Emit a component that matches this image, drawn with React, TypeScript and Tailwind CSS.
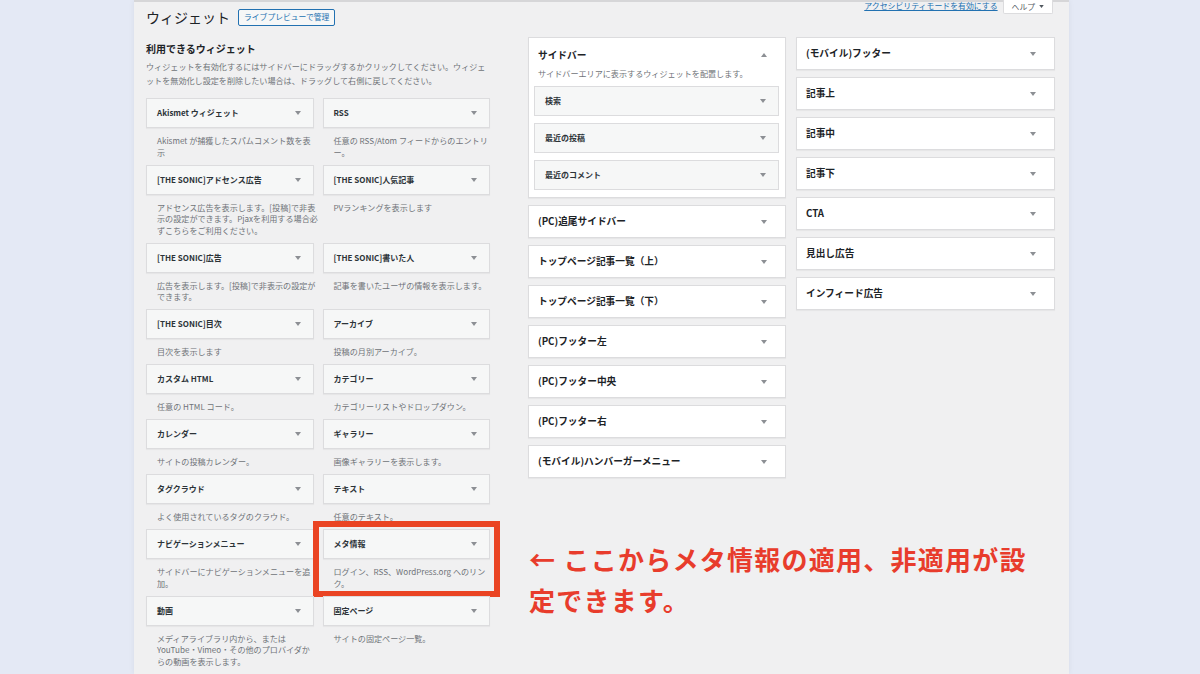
import React from "react";

type W = { t: string; d: string[]; red?: boolean };

const rows: [W, W][] = [
  [
    { t: "Akismet ウィジェット", d: ["Akismet が捕獲したスパムコメント数を表", "示"] },
    { t: "RSS", d: ["任意の RSS/Atom フィードからのエントリ", "ー。"] },
  ],
  [
    {
      t: "[THE SONIC]アドセンス広告",
      d: ["アドセンス広告を表示します。[投稿]で非表", "示の設定ができます。Pjaxを利用する場合必", "ずこちらをご利用ください。"],
    },
    { t: "[THE SONIC]人気記事", d: ["PVランキングを表示します"] },
  ],
  [
    { t: "[THE SONIC]広告", d: ["広告を表示します。[投稿]で非表示の設定が", "できます。"] },
    { t: "[THE SONIC]書いた人", d: ["記事を書いたユーザの情報を表示します。"] },
  ],
  [
    { t: "[THE SONIC]目次", d: ["目次を表示します"] },
    { t: "アーカイブ", d: ["投稿の月別アーカイブ。"] },
  ],
  [
    { t: "カスタム HTML", d: ["任意の HTML コード。"] },
    { t: "カテゴリー", d: ["カテゴリーリストやドロップダウン。"] },
  ],
  [
    { t: "カレンダー", d: ["サイトの投稿カレンダー。"] },
    { t: "ギャラリー", d: ["画像ギャラリーを表示します。"] },
  ],
  [
    { t: "タグクラウド", d: ["よく使用されているタグのクラウド。"] },
    { t: "テキスト", d: ["任意のテキスト。"] },
  ],
  [
    { t: "ナビゲーションメニュー", d: ["サイドバーにナビゲーションメニューを追", "加。"] },
    { t: "メタ情報", d: ["ログイン、RSS、WordPress.org へのリン", "ク。"], red: true },
  ],
  [
    { t: "動画", d: ["メディアライブラリ内から、または", "YouTube・Vimeo・その他のプロバイダか", "らの動画を表示します。"] },
    { t: "固定ページ", d: ["サイトの固定ページ一覧。"] },
  ],
];

const col1 = [
  "(PC)追尾サイドバー",
  "トップページ記事一覧（上）",
  "トップページ記事一覧（下）",
  "(PC)フッター左",
  "(PC)フッター中央",
  "(PC)フッター右",
  "(モバイル)ハンバーガーメニュー",
];

const col2 = ["(モバイル)フッター", "記事上", "記事中", "記事下", "CTA", "見出し広告", "インフィード広告"];

function Down() {
  return (
    <svg width="6" height="4" viewBox="0 0 6 4" className="shrink-0">
      <path d="M0 0h6L3 4z" fill="#8c8f94" />
    </svg>
  );
}

function Up() {
  return (
    <svg width="6" height="4" viewBox="0 0 6 4" className="shrink-0">
      <path d="M0 4h6L3 0z" fill="#8c8f94" />
    </svg>
  );
}

function Widget({ w }: { w: W }) {
  return (
    <div className="relative">
      <div className="h-[30px] border border-[#dcdcde] bg-[#f6f7f7] flex items-center justify-between pl-[10px] pr-[12px] shadow-[0_1px_1px_rgba(0,0,0,0.04)]">
        <span className="text-[8px] font-bold text-[#2c3338]">{w.t}</span>
        <Down />
      </div>
      <div className="pt-[7px] pb-[6.5px] pl-[11px] text-[8.1px] leading-[11.5px] text-[#6f7378]">
        {w.d.map((l, i) => (
          <div key={i} className="whitespace-nowrap">
            {l}
          </div>
        ))}
      </div>
      {w.red && (
        <div className="absolute -left-[10px] -right-[10px] -top-[8px] -bottom-[1px] border-[6px] border-[#ea4423] pointer-events-none" />
      )}
    </div>
  );
}

function ClosedSidebar({ t }: { t: string }) {
  return (
    <div className="h-[33px] bg-white border border-[#dcdcde] flex items-center justify-between pl-[9px] pr-[18px] shadow-[0_1px_1px_rgba(0,0,0,0.04)]">
      <span className="text-[9.7px] font-bold text-[#1d2327]">{t}</span>
      <Down />
    </div>
  );
}

function InnerWidget({ t }: { t: string }) {
  return (
    <div className="h-[30px] border border-[#dcdcde] bg-[#f6f7f7] flex items-center justify-between pl-[10px] pr-[12px]">
      <span className="text-[8px] font-bold text-[#2c3338]">{t}</span>
      <Down />
    </div>
  );
}

export default function App() {
  return (
    <div className="w-[1200px] h-[674px] overflow-hidden bg-[#e4e9f5] font-['Noto_Sans_CJK_JP','Noto_Sans',sans-serif]">
      <div className="relative ml-[134px] w-[935px] h-[674px] bg-[#f0f0f1] border-t-2 border-[#d6d6d8] shadow-[0_0_6px_rgba(0,0,0,0.06)]">
        {/* header */}
        <div className="flex justify-between items-start pl-[12px] pr-[16px]">
          <div className="flex items-center gap-[8px] pt-[5px]">
            <h1 className="text-[14px] leading-[20px] text-[#1d2327] font-normal">ウィジェット</h1>
            <div className="h-[17px] border border-[#2271b1] bg-[#f6f7f7] rounded-[2px] px-[5px] flex items-center text-[7.8px] text-[#2271b1]">
              ライブプレビューで管理
            </div>
          </div>
          <div className="flex items-start gap-[5px] -mt-[2px]">
            <span className="text-[7.9px] leading-[12px] text-[#2271b1] underline">アクセシビリティモードを有効にする</span>
            <div className="h-[14px] bg-white border-x border-b border-[#dcdcde] rounded-b-[2px] px-[8px] flex items-center gap-[4px] text-[7.8px] text-[#50575e]">
              ヘルプ
              <svg width="5" height="3" viewBox="0 0 6 4">
                <path d="M0 0h6L3 4z" fill="#50575e" />
              </svg>
            </div>
          </div>
        </div>

        {/* content */}
        <div className="flex pl-[12px] pr-[13px] mt-[10px]">
          {/* available widgets */}
          <div className="w-[344px] shrink-0 pt-[5px]">
            <h2 className="text-[10px] leading-[14px] font-bold text-[#1d2327]">利用できるウィジェット</h2>
            <div className="mt-[4px] text-[8.1px] leading-[14px] text-[#6f7378]">
              <div className="whitespace-nowrap">ウィジェットを有効化するにはサイドバーにドラッグするかクリックしてください。ウィジェ</div>
              <div className="whitespace-nowrap">ットを無効化し設定を削除したい場合は、ドラッグして右側に戻してください。</div>
            </div>
            <div className="mt-[10px] grid grid-cols-2 gap-x-[9px]">
              {rows.map((r, i) => (
                <React.Fragment key={i}>
                  <Widget w={r[0]} />
                  <Widget w={r[1]} />
                </React.Fragment>
              ))}
              <div className="h-[30px] border border-[#dcdcde] bg-[#f6f7f7]" />
              <div className="h-[30px] border border-[#dcdcde] bg-[#f6f7f7]" />
            </div>
          </div>

          {/* sidebar column 1 */}
          <div className="ml-[38px] w-[258px] shrink-0 flex flex-col gap-[7px]">
            <div className="bg-white border border-[#dcdcde] pb-[7px] shadow-[0_1px_1px_rgba(0,0,0,0.04)]">
              <div className="flex items-center justify-between pl-[9px] pr-[18px] h-[30px] pt-[4px]">
                <span className="text-[9.7px] font-bold text-[#1d2327]">サイドバー</span>
                <Up />
              </div>
              <div className="pl-[9px] text-[8.1px] leading-[11px] text-[#6f7378] whitespace-nowrap">
                サイドバーエリアに表示するウィジェットを配置します。
              </div>
              <div className="mt-[7px] px-[5px] flex flex-col gap-[7px] pr-[6px]">
                <InnerWidget t="検索" />
                <InnerWidget t="最近の投稿" />
                <InnerWidget t="最近のコメント" />
              </div>
            </div>
            {col1.map((t) => (
              <ClosedSidebar key={t} t={t} />
            ))}
          </div>

          {/* sidebar column 2 */}
          <div className="ml-[10px] w-[259px] shrink-0 flex flex-col gap-[7px]">
            {col2.map((t) => (
              <ClosedSidebar key={t} t={t} />
            ))}
          </div>
        </div>

        {/* annotation */}
        <div className="absolute left-[395px] top-[536px] text-[26px] leading-[41px] font-bold text-[#e83c2c] tracking-[1.25px]">
          <div className="whitespace-nowrap">← ここからメタ情報の適用、非適用が設</div>
          <div className="whitespace-nowrap">定できます。</div>
        </div>
      </div>
    </div>
  );
}
